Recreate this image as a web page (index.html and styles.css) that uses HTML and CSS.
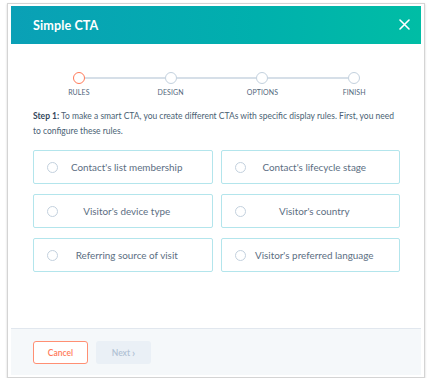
FILE: index.html
```html
<!DOCTYPE html>
<html lang="en">
<head>
<meta charset="utf-8">
<title>Simple CTA</title>
<link rel="stylesheet" href="styles.css">
</head>
<body>
<div class="frame">
  <div class="modal">
    <header class="modal-header">
      <h1 class="title">Simple CTA</h1>
      <button class="close" aria-label="Close">
        <svg width="11" height="11" viewBox="0 0 11 11"><path d="M1 1L10 10M10 1L1 10" stroke="#fff" stroke-width="1.6" stroke-linecap="round"/></svg>
      </button>
    </header>
    <main class="modal-body">
      <ol class="stepper">
        <li class="step active"><span class="dot-row"><span class="line"></span><span class="dot"></span><span class="line"></span></span><span class="label">RULES</span></li>
        <li class="step"><span class="dot-row"><span class="line"></span><span class="dot"></span><span class="line"></span></span><span class="label">DESIGN</span></li>
        <li class="step"><span class="dot-row"><span class="line"></span><span class="dot"></span><span class="line"></span></span><span class="label">OPTIONS</span></li>
        <li class="step"><span class="dot-row"><span class="line"></span><span class="dot"></span><span class="line"></span></span><span class="label">FINISH</span></li>
      </ol>
      <p class="intro"><strong>Step 1:</strong> To make a smart CTA, you create different CTAs with specific display rules. First, you need to configure these rules.</p>
      <div class="options">
        <label class="option"><span class="radio"></span><span class="opt-text">Contact's list membership</span></label>
        <label class="option"><span class="radio"></span><span class="opt-text">Contact's lifecycle stage</span></label>
        <label class="option"><span class="radio"></span><span class="opt-text">Visitor's device type</span></label>
        <label class="option"><span class="radio"></span><span class="opt-text">Visitor's country</span></label>
        <label class="option"><span class="radio"></span><span class="opt-text">Referring source of visit</span></label>
        <label class="option"><span class="radio"></span><span class="opt-text">Visitor's preferred language</span></label>
      </div>
    </main>
    <footer class="modal-footer">
      <button class="btn btn-cancel">Cancel</button>
      <button class="btn btn-next">Next <span class="chev">&rsaquo;</span></button>
    </footer>
  </div>
</div>
</body>
</html>
```

FILE: styles.css
```css
* { box-sizing: border-box; }
html, body { margin: 0; padding: 0; background: #fff; }
body {
  padding: 3px 0 0 7px;
  font-family: Lato, "Open Sans", "Liberation Sans", sans-serif;
  color: #33475b;
}
.frame {
  width: 418px;
  height: 375px;
  border: 1px solid #d4d4d4;
  padding: 2px 3px;
  box-shadow: 0 1px 2px rgba(0,0,0,0.18);
  background: #fff;
}
.modal {
  height: 369px;
  display: flex;
  flex-direction: column;
}
.modal-header {
  height: 38px;
  flex: none;
  display: flex;
  align-items: center;
  justify-content: space-between;
  padding: 0 11px 0 22px;
  background: linear-gradient(90deg, #0aa0b6 0%, #00b0ad 60%, #00bda5 100%);
}
.title {
  margin: 0;
  font-size: 12.6px;
  font-weight: 700;
  color: #fff;
  letter-spacing: 0.1px;
}
.close {
  border: 0;
  background: none;
  padding: 0;
  width: 12px;
  height: 12px;
  display: flex;
  align-items: center;
  justify-content: center;
  margin-top: -2px;
}
.modal-body {
  flex: 1;
  padding: 28px 21px 0 22px;
}
.stepper {
  list-style: none;
  margin: 0;
  padding: 0;
  display: grid;
  grid-template-columns: repeat(4, 1fr);
}
.step {
  display: flex;
  flex-direction: column;
  align-items: center;
}
.dot-row {
  display: flex;
  align-items: center;
  width: 100%;
}
.line {
  flex: 1;
  height: 1.5px;
  background: #d6dfe8;
}
.step:first-child .line:first-child,
.step:last-child .line:last-child { background: transparent; }
.dot {
  width: 12px;
  height: 12px;
  border-radius: 50%;
  border: 1.5px solid #c3d1de;
  background: #fff;
  flex: none;
}
.step.active .dot { border-color: #ff7a59; }
.label {
  margin-top: 4px;
  font-size: 7px;
  line-height: 9px;
  color: #51667b;
  letter-spacing: 0.1px;
}
.intro {
  margin: 12px 0 0;
  font-size: 8.5px;
  line-height: 15px;
  color: #4a5f74;
}
.intro strong { color: #33475b; font-weight: 700; }
.options {
  margin-top: 11px;
  display: grid;
  grid-template-columns: 1fr 1fr;
  grid-auto-rows: 34px;
  column-gap: 8px;
  row-gap: 10px;
}
.option {
  display: flex;
  align-items: center;
  border: 1px solid #b3e5ec;
  border-radius: 2px;
  padding: 0 16px 0 13px;
  background: #fff;
}
.radio {
  width: 11px;
  height: 11px;
  border-radius: 50%;
  border: 1px solid #c3d1de;
  flex: none;
}
.opt-text {
  flex: 1;
  text-align: center;
  font-size: 9.9px;
  color: #5b6e82;
}
.modal-footer {
  height: 47px;
  flex: none;
  border-top: 1px solid #e1e7ee;
  background: #f5f8fa;
  display: flex;
  align-items: flex-start;
  gap: 8px;
  padding: 12px 22px 0;
}
.btn {
  width: 55px;
  height: 23px;
  border-radius: 3px;
  font-family: inherit;
  font-size: 8.5px;
  font-weight: 600;
  display: flex;
  align-items: center;
  justify-content: center;
  padding: 0;
}
.btn-cancel {
  border: 1px solid #ff8f73;
  background: #fff;
  color: #ff7a59;
}
.btn-next {
  border: 0;
  background: #eaf0f6;
  color: #b0c1d4;
  gap: 2px;
}
.chev { font-size: 11px; line-height: 1; margin-top: -1px; }
```
